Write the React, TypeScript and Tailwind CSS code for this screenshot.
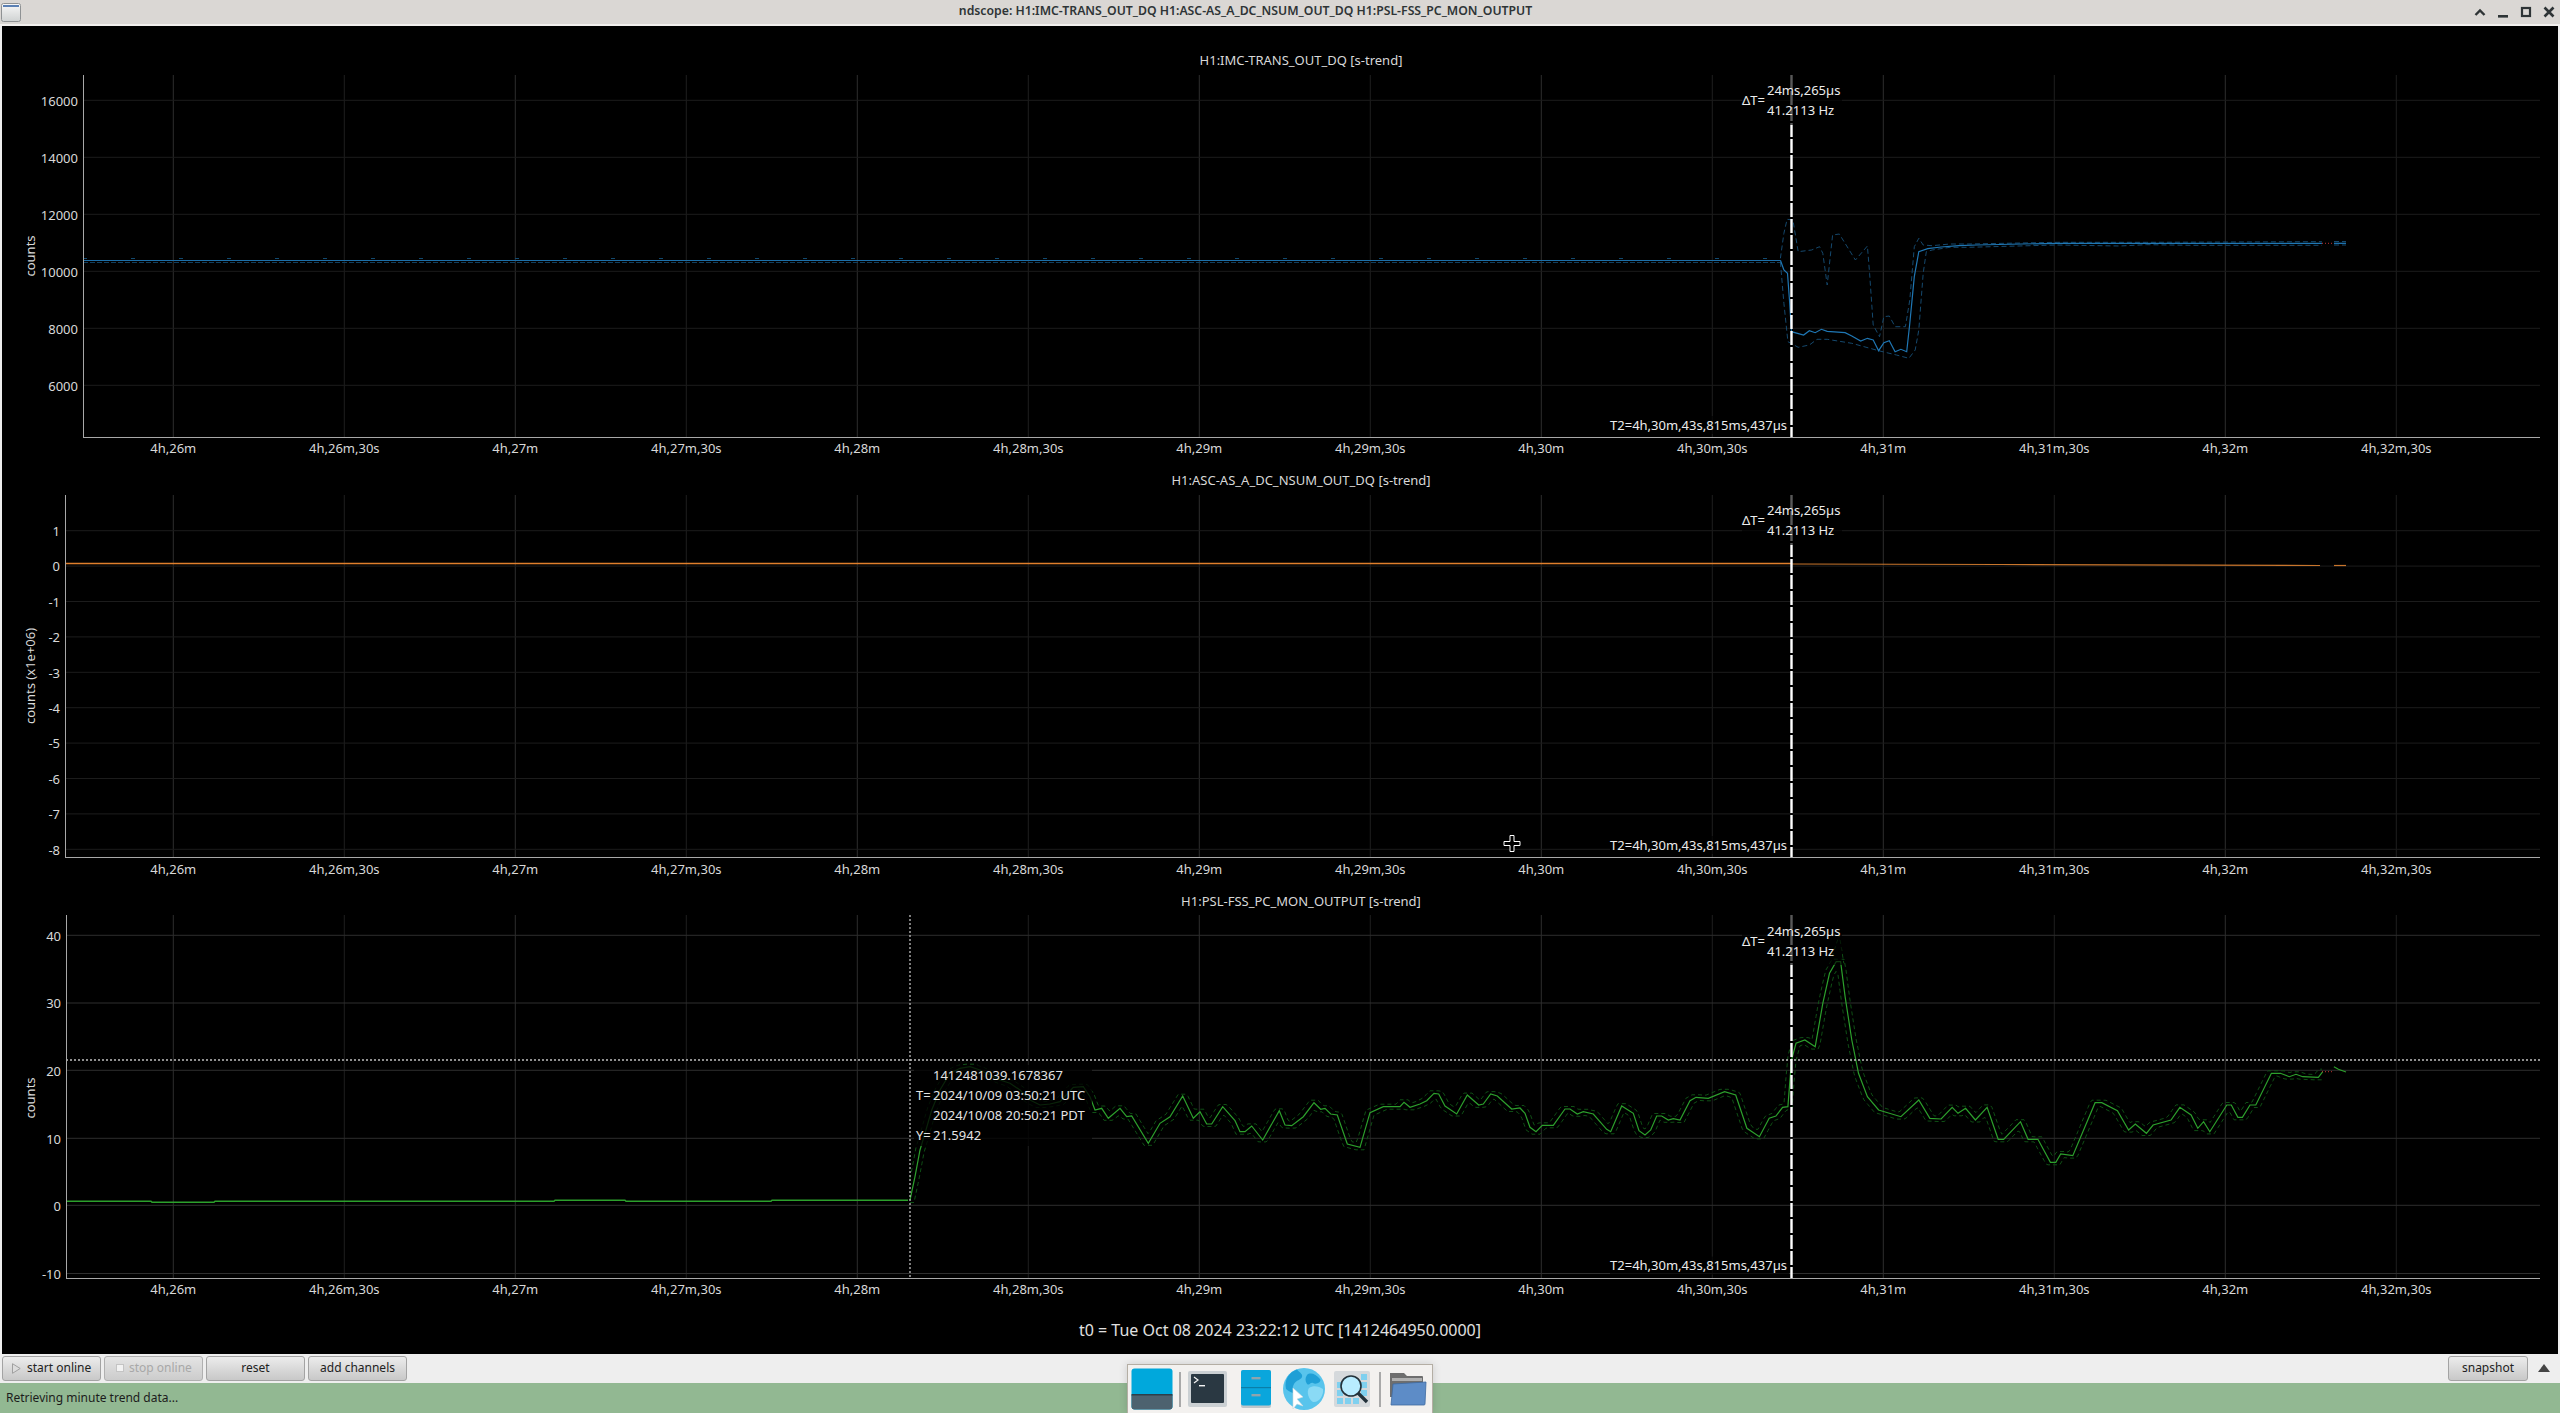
import React from "react";

type P = [number, number];
const z3 = (a: number[]): P[] => {
  const r: P[] = [];
  for (let i = 0; i < a.length; i += 2) r.push([1700 + a[i] / 2.24, 60 + a[i + 1] / 3]);
  return r;
};
const z6 = (a: number[]): P[] => {
  const r: P[] = [];
  for (let i = 0; i < a.length; i += 2) r.push([860 + a[i] / 3, 1000 + a[i + 1] / 3]);
  return r;
};
const z7 = (a: number[]): P[] => {
  const r: P[] = [];
  for (let i = 0; i < a.length; i += 2) r.push([1700 + a[i] / 2.24, 900 + a[i + 1] / 3]);
  return r;
};
const z10 = (a: number[]): P[] => {
  const r: P[] = [];
  for (let i = 0; i < a.length; i += 2) r.push([1340 + a[i] / 3, 1040 + a[i + 1] / 3]);
  return r;
};
const pts = (p: P[]) => p.map(([x, y]) => `${x.toFixed(1)},${y.toFixed(1)}`).join(" ");

const blueMain = z3([
  180, 601, 188, 630, 196, 640, 201, 730, 205, 815, 232, 825, 245, 812, 258, 818, 272, 808, 285, 814, 325, 818, 340, 828, 360, 843, 375,
  835, 388, 840, 400, 872, 412, 848, 424, 842, 437, 875, 450, 868, 463, 875, 470, 790, 480, 650, 490, 575, 510, 566, 540, 561, 580, 557, 620, 555,
  720, 552, 800, 550, 1000, 550, 1393, 550,
]);
const blueUp = z3([
  180, 595, 188, 520, 195, 478, 208, 480, 220, 575, 250, 570, 268, 560, 275, 580, 285, 675, 297, 525, 312, 522, 348, 600, 375, 558, 380,
  640, 388, 795, 402, 830, 412, 770, 424, 768, 437, 800, 460, 800, 470, 720, 480, 560, 490, 535, 500, 555, 520, 557, 560, 552, 600, 552, 800, 547,
  1000, 547, 1380, 545, 1393, 545,
]);
const blueDn = z3([
  180, 606, 188, 730, 197, 845, 220, 862, 245, 855, 262, 838, 285, 838, 340, 850, 400, 872, 440, 885, 468, 895, 482, 870, 490, 810, 500,
  640, 507, 575, 520, 570, 560, 562, 600, 562, 800, 555, 940, 558, 1000, 554, 1100, 556, 1393, 556,
]);

const greenFlat: P[] = [
  [66, 1201.3], [151, 1201.3], [152, 1202.3], [214, 1202.3], [215, 1201.3], [554, 1201.3], [555, 1200.3], [625, 1200.3], [626, 1201.3], [771, 1201.3],
  [772, 1200.3], [908, 1200.3],
];
const greenActive: P[] = [
  ...z6([
    150, 600, 165, 530, 180, 450, 195, 400, 215, 330, 240, 270, 270, 220, 300, 205, 330, 200, 360, 210, 390, 225, 420, 240, 450, 250, 480, 270, 510,
    300, 540, 315, 570, 312, 600, 305, 640, 262, 670, 260, 690, 290, 705, 330, 725, 325, 745, 355, 780, 325, 800, 350, 815, 348, 865, 430, 900, 370,
    930, 350, 968, 288, 1000, 355, 1020, 335, 1040, 372, 1055, 372, 1088, 320, 1125, 362, 1140, 395, 1155, 395, 1175, 378, 1208, 420, 1258, 332, 1275,
    375, 1295, 377, 1330, 350, 1362, 308, 1382, 328, 1395, 325, 1412, 342, 1432, 345,
  ]),
  ...z10([
    22, 312, 60, 322, 90, 218, 130, 200, 180, 200, 192, 187, 210, 202, 240, 192, 260, 182, 282, 160, 296, 162, 315, 198, 350, 222, 382, 165, 416, 195,
    430, 192, 452, 162, 472, 168, 515, 207, 540, 204, 555, 220, 570, 262, 588, 275, 607, 256, 640, 256, 675, 207, 690, 207, 712, 222, 730, 215, 760,
    222, 800, 268, 812, 275, 845, 198, 880, 220, 897, 272, 915, 285, 932, 270, 950, 228, 965, 228, 985, 240, 1000, 236, 1020, 240, 1050, 182, 1068,
    172, 1105, 175,
  ]),
  ...z7([
    55, 575, 80, 585, 105, 685, 133, 710, 155, 655, 170, 648, 185, 622, 197, 620, 205, 480, 215, 430, 235, 420, 258, 440, 275, 310, 290, 220, 305, 185, 315, 185,
    325, 290, 340, 420, 355, 520, 375, 590, 400, 630, 450, 650, 490, 600, 515, 655, 540, 657, 565, 622, 578, 640, 595, 625, 617, 660, 643, 622, 668,
    718, 680, 718, 718, 665, 735, 718, 757, 718, 785, 787, 797, 787, 808, 762, 835, 767, 885, 608, 900, 608, 935, 632, 960, 690, 975, 672, 1000, 700,
    1015, 675, 1055, 660, 1075, 622, 1100, 645, 1115, 685, 1128, 665, 1142, 695, 1180, 615, 1190, 615, 1205, 652, 1215, 652, 1232, 615, 1245, 615,
    1280, 520, 1300, 520, 1320, 530, 1335, 523, 1350, 530, 1385, 532, 1395, 515,
  ]),
];
const greenTail = z7([1420, 500, 1430, 508, 1447, 516]);
const greenPeak = z7([296, 170, 312, 105, 322, 190]);

const at = (p: P[], x: number) => {
  for (let i = 1; i < p.length; i++) {
    if (x <= p[i][0]) {
      const [a, b] = p[i - 1];
      const [c, d] = p[i];
      return c === a ? d : b + ((d - b) * (x - a)) / (c - a);
    }
  }
  return p[p.length - 1][1];
};
const envelope = (p: P[], sign: number, off: number): P[] => {
  const out: P[] = [];
  const s = p[0][0];
  const e = p[p.length - 1][0];
  for (let x = s; x <= e; x += 2) {
    let v = at(p, x);
    for (let d = -4; d <= 4; d += 1) {
      const w = at(p, Math.min(e, Math.max(s, x + d)));
      v = sign < 0 ? Math.min(v, w) : Math.max(v, w);
    }
    out.push([x, v + sign * off]);
  }
  return out;
};
const greenUp = envelope(greenActive, -1, 2.5);
const greenDn = envelope(greenActive, 1, 2.5);

const xLabels = [
  "4h,26m", "4h,26m,30s", "4h,27m", "4h,27m,30s", "4h,28m", "4h,28m,30s", "4h,29m", "4h,29m,30s", "4h,30m", "4h,30m,30s", "4h,31m", "4h,31m,30s", "4h,32m", "4h,32m,30s",
];
const xAt = (i: number) => 173.3 + 171 * i;
const CURSOR = 1791.5;

type PlotProps = {
  cls: string;
  vb: string;
  left: number;
  top: number;
  bottom: number;
  ticks: { y: number; t: string }[];
  grid: string;
  labelX: number;
  xLabelY: number;
  title: string;
  titleY: number;
  dy: number;
  children: React.ReactNode;
};

function Plot({ cls, vb, left, top, bottom, ticks, grid, labelX, xLabelY, title, titleY, dy, children }: PlotProps) {
  return (
    <svg className={cls} viewBox={vb} fontSize="13" fill="#d8d8d8">
      {xLabels.map((t, i) => (
        <line key={t} x1={xAt(i)} x2={xAt(i)} y1={top} y2={bottom} stroke={i % 2 === 0 ? "#2e2e2e" : "#1e1e1e"} />
      ))}
      {ticks.map((k) => (
        <line key={k.t} x1={left} x2={2540} y1={k.y} y2={k.y} stroke={grid} />
      ))}
      {children}
      <line x1={CURSOR} x2={CURSOR} y1={top} y2={bottom} stroke="#ffffff" strokeWidth="2.4" strokeDasharray="14 2" />
      <rect x={1742} y={top} width={100} height={50} fill="#000" fillOpacity="0.65" />
      <rect x={1610} y={dy + 416} width={179} height={18} fill="#000" fillOpacity="0.65" />
      <text x={1742} y={dy + 100} dominantBaseline="central" fill="#ececec">ΔT=</text>
      <text x={1767} y={dy + 90} dominantBaseline="central" fill="#ececec">24ms,265µs</text>
      <text x={1767} y={dy + 110} dominantBaseline="central" fill="#ececec">41.2113 Hz</text>
      <text x={1787} y={dy + 424.5} dominantBaseline="central" textAnchor="end" fill="#ececec">T2=4h,30m,43s,815ms,437µs</text>
      <line x1={left + 0.5} x2={left + 0.5} y1={top} y2={bottom} stroke="#a8a8a8" />
      <line x1={left} x2={2540} y1={bottom + 0.5} y2={bottom + 0.5} stroke="#a8a8a8" />
      {ticks.map((k) => (
        <text key={k.t} x={labelX} y={k.y + 0.2} textAnchor="end" dominantBaseline="central">{k.t}</text>
      ))}
      {xLabels.map((t, i) => (
        <text key={t} x={xAt(i)} y={xLabelY} textAnchor="middle" dominantBaseline="central">{t}</text>
      ))}
      <text x={0} y={0} textAnchor="middle" dominantBaseline="central" transform={`translate(30 ${titleY}) rotate(-90)`}>{title}</text>
    </svg>
  );
}

function PushButton({ label, disabled, icon, center }: { label: string; disabled?: boolean; icon?: React.ReactNode; center?: boolean }) {
  return (
    <button
      className={
        center
          ? "w-[99px] h-[25px] flex items-center justify-center rounded-[3px] border border-[#a3a3a3] bg-linear-to-b from-[#ececec] to-[#c8c8c8] text-[12px] text-[#222222]"
          : disabled
            ? "w-[99px] h-[25px] flex items-center pl-[11px] gap-[5px] rounded-[3px] border border-[#b0b0b0] bg-linear-to-b from-[#e4e4e4] to-[#cccccc] text-[12px] text-[#a8a8a8]"
            : "w-[99px] h-[25px] flex items-center pl-[9px] gap-[6px] rounded-[3px] border border-[#a3a3a3] bg-linear-to-b from-[#ececec] to-[#c8c8c8] text-[12px] text-[#222222]"
      }
    >
      {icon}
      {label}
    </button>
  );
}

function WindowIcon() {
  return (
    <svg width="20" height="19" viewBox="0 0 20 19" className="ml-[1px]">
      <defs>
        <linearGradient id="wi" x1="0" y1="0" x2="0" y2="1">
          <stop offset="0" stopColor="#f8f8f8" />
          <stop offset="1" stopColor="#cfd2d2" />
        </linearGradient>
      </defs>
      <rect x="0.5" y="0.5" width="19" height="18" rx="2" fill="url(#wi)" stroke="#8f9294" />
      <rect x="2" y="2" width="16" height="2" fill="#5b80b4" />
    </svg>
  );
}

function TitleButtons() {
  return (
    <div className="flex items-center gap-[3px] pr-[1px]">
      <svg width="20" height="20" viewBox="0 0 20 20"><path d="M5.5 13 10 8.5 14.5 13" fill="none" stroke="#2e3436" strokeWidth="2.4" /></svg>
      <svg width="20" height="20" viewBox="0 0 20 20"><rect x="5" y="13" width="10" height="2.6" fill="#2e3436" /></svg>
      <svg width="20" height="20" viewBox="0 0 20 20"><rect x="6" y="6" width="8" height="8" fill="none" stroke="#2e3436" strokeWidth="2.2" /></svg>
      <svg width="20" height="20" viewBox="0 0 20 20"><path d="M5.5 5.5 14.5 14.5M14.5 5.5 5.5 14.5" stroke="#2e3436" strokeWidth="2.6" /></svg>
    </div>
  );
}

function Dock() {
  return (
    <div className="absolute left-[1127px] bottom-0 w-[306px] h-[49px] flex items-center bg-[#f3f1ef] border border-b-0 border-[#b4aea4] shadow-[0_0_8px_rgba(0,0,0,0.15)]">
      <svg width="42" height="42" viewBox="0 0 42 42" className="ml-[3px]">
        <rect x="0.5" y="0.5" width="41" height="41" rx="3" fill="#00a8dc" />
        <path d="M0.5 27H41.5V38.5a3 3 0 0 1-3 3H3.5a3 3 0 0 1-3-3Z" fill="#4d626f" />
        <rect x="0.5" y="26" width="41" height="1.5" fill="#2c3e4a" />
      </svg>
      <div className="ml-[6px] w-[2px] h-[35px] bg-[#a9a9a9]" />
      <svg width="39" height="36" viewBox="0 0 39 36" className="ml-[7px]">
        <rect x="0" y="0" width="39" height="36" rx="2" fill="#cbd0d3" />
        <rect x="3" y="3" width="33" height="29" rx="1" fill="#2a3842" />
        <path d="M6 6 10 9 6 12" fill="none" stroke="#f4f4f4" strokeWidth="1.2" />
        <rect x="11" y="14" width="6" height="1.4" fill="#f4f4f4" />
      </svg>
      <svg width="30" height="38" viewBox="0 0 30 38" className="ml-[14px]">
        <rect x="0" y="0" width="30" height="38" rx="2" fill="#bfc6ca" />
        <rect x="0" y="0" width="30" height="35.5" rx="2" fill="#0aa6dc" />
        <rect x="0" y="17" width="30" height="1.2" fill="#0a7ea8" />
        <rect x="10.5" y="7" width="9" height="2.4" fill="#8fa4ad" />
        <rect x="10.5" y="24" width="9" height="2.4" fill="#8fa4ad" />
      </svg>
      <svg width="42" height="42" viewBox="0 0 42 42" className="ml-[12px]">
        <circle cx="21" cy="21" r="21" fill="#58c4ec" />
        <path d="M14 1.5C17 5 20 6 19 9c-1 3-6 3-8 7s-2 7 1 9-6-1-9-4C1 12 6 4 14 1.5Z" fill="#1f9fd6" />
        <path d="M24 7c3-3 9-1 13 4 2 3-4 6-7 4-3-1-3 3-6 1-2-3-2-6 0-9Z" fill="#1f9fd6" />
        <path d="M26 20c4-3 10-2 14 1 1 6-4 14-10 13-4-2-7-10-4-14Z" fill="#8adaf5" />
        <path d="M14 20 14 41 18 36 24 38 18 31 24 29Z" transform="translate(-4 0)" fill="#ffffff" stroke="#cfd8dc" strokeWidth="0.6" />
      </svg>
      <svg width="36" height="36" viewBox="0 0 36 36" className="ml-[9px]">
        <rect width="36" height="36" rx="2" fill="#d5d9dc" />
        <g fill="#7fd0ef">
          <rect x="27" y="3" width="6" height="6" /><rect x="27" y="11" width="6" height="6" /><rect x="3" y="19" width="6" height="6" /><rect x="3" y="27" width="6" height="6" />
          <rect x="11" y="27" width="6" height="6" /><rect x="19" y="27" width="6" height="6" /><rect x="3" y="11" width="6" height="6" /><rect x="27" y="19" width="6" height="6" />
        </g>
        <circle cx="17" cy="15" r="10" fill="#b8ecff" stroke="#22313a" strokeWidth="1.6" />
        <path d="M24 22 33 31" stroke="#22313a" strokeWidth="3.4" />
      </svg>
      <div className="ml-[9px] w-[2px] h-[35px] bg-[#a9a9a9]" />
      <svg width="38" height="34" viewBox="0 0 38 34" className="ml-[8px]">
        <path d="M1 1h14l3 3h15a1 1 0 0 1 1 1v20H1Z" fill="#6e6e6e" />
        <rect x="3" y="6" width="30" height="3" fill="#b0b0b0" />
        <path d="M4 12 37 10 36 32a1 1 0 0 1-1 1H2Z" fill="#5d8cc7" stroke="#3e6aa0" strokeWidth="0.8" />
      </svg>
    </div>
  );
}

const plot1Ticks = [
  { y: 100.3, t: "16000" }, { y: 157.3, t: "14000" }, { y: 214.3, t: "12000" }, { y: 271.3, t: "10000" }, { y: 328.3, t: "8000" }, { y: 385.3, t: "6000" },
];
const plot2Ticks = [1, 0, -1, -2, -3, -4, -5, -6, -7, -8].map((v, i) => ({ y: 530.7 + 35.4 * i, t: String(v) }));
const plot3Ticks = [
  { y: 935.3, t: "40" }, { y: 1003, t: "30" }, { y: 1070.3, t: "20" }, { y: 1138.3, t: "10" }, { y: 1205.3, t: "0" }, { y: 1273.5, t: "-10" },
];

export default function App() {
  return (
    <div className="relative w-[2560px] h-[1413px] overflow-hidden flex flex-col bg-[#eeeeee] font-['Noto_Sans',sans-serif]">
      <header className="h-[24px] shrink-0 bg-[#dad7d4] flex items-center justify-between">
        <WindowIcon />
        <span className="text-[12.25px] font-semibold text-[#2e3436] leading-[20px] mb-[3px]">
          ndscope: H1:IMC-TRANS_OUT_DQ H1:ASC-AS_A_DC_NSUM_OUT_DQ H1:PSL-FSS_PC_MON_OUTPUT
        </span>
        <TitleButtons />
      </header>
      <div className="h-[2px] shrink-0 bg-[#f2f0ee]" />
      <main className="mx-[2px] h-[1328px] shrink-0 bg-black flex flex-col text-[#d8d8d8]">
        <h2 className="h-[44px] shrink-0 flex items-end justify-center pl-[42px] text-[13px] leading-[20px] font-normal">H1:IMC-TRANS_OUT_DQ [s-trend]</h2>
        <Plot cls="block shrink-0 w-[2556px] h-[400px]" vb="2 70 2556 400" left={83} top={75} bottom={437} ticks={plot1Ticks} grid="#1c1c1c" labelX={78} xLabelY={448} title="counts" titleY={256} dy={0}>
          <line x1={83} x2={1780} y1={258.5} y2={258.5} stroke="#124a70" strokeDasharray="4 44" shapeRendering="crispEdges" />
          <line x1={83} x2={1780} y1={262.5} y2={262.5} stroke="#103f60" strokeDasharray="5 2" shapeRendering="crispEdges" />
          <line x1={83} x2={1780} y1={260.5} y2={260.5} stroke="#1d6fa8" shapeRendering="crispEdges" />
          <polyline points={pts(blueUp)} fill="none" stroke="#15496e" strokeDasharray="5 3" />
          <polyline points={pts(blueDn)} fill="none" stroke="#15496e" strokeDasharray="5 3" />
          <polyline points={pts(blueMain)} fill="none" stroke="#1f77b4" strokeWidth="1.2" />
          <line x1={2322} x2={2334} y1={243.3} y2={243.3} stroke="#c03030" strokeDasharray="1 2" />
          <line x1={2334} x2={2346} y1={243.3} y2={243.3} stroke="#1f77b4" strokeWidth="1.3" />
          <line x1={2334} x2={2346} y1={241.5} y2={241.5} stroke="#15496e" strokeDasharray="5 3" />
          <line x1={2334} x2={2346} y1={245} y2={245} stroke="#15496e" strokeDasharray="5 3" />
        </Plot>
        <h2 className="h-[20px] shrink-0 flex items-center justify-center pl-[42px] text-[13px] leading-[20px] font-normal">H1:ASC-AS_A_DC_NSUM_OUT_DQ [s-trend]</h2>
        <Plot cls="block shrink-0 w-[2556px] h-[401px]" vb="2 490 2556 401" left={65} top={495} bottom={857} ticks={plot2Ticks} grid="#1c1c1c" labelX={60} xLabelY={869} title="counts (x1e+06)" titleY={676} dy={420}>
          <line x1={65} x2={1791} y1={563.5} y2={563.5} stroke="#e07f2c" strokeWidth="1.3" />
          <polyline points="1791,564 2000,564.5 2320,565.5" fill="none" stroke="#c8752c" strokeWidth="1.2" />
          <line x1={2334} x2={2346} y1={565.5} y2={565.5} stroke="#c8752c" strokeWidth="1.2" />
          <path d="M1510 835.5h4v6h6v4h-6v6h-4v-6h-6v-4h6Z" fill="#000" stroke="#ffffff" strokeWidth="1" />
        </Plot>
        <h2 className="h-[20px] shrink-0 flex items-center justify-center pl-[42px] text-[13px] leading-[20px] font-normal">H1:PSL-FSS_PC_MON_OUTPUT [s-trend]</h2>
        <Plot cls="block shrink-0 w-[2556px] h-[389px]" vb="2 911 2556 389" left={66} top={915} bottom={1278} ticks={plot3Ticks} grid="#2e2e2e" labelX={61} xLabelY={1289} title="counts" titleY={1098} dy={840.6}>
          <polyline points={pts(greenFlat)} fill="none" stroke="#2ca02c" strokeWidth="1.4" />
          <polyline points={pts(greenUp)} fill="none" stroke="#0f4f15" strokeDasharray="4 3" />
          <polyline points={pts(greenDn)} fill="none" stroke="#0f4f15" strokeDasharray="4 3" />
          <polyline points={pts(greenPeak)} fill="none" stroke="#0f4f15" strokeDasharray="4 3" />
          <polyline points={pts(greenActive)} fill="none" stroke="#2ca02c" strokeWidth="1.2" />
          <line x1={2322} x2={2334} y1={1071.7} y2={1071.7} stroke="#c03030" strokeDasharray="1 2" />
          <polyline points={pts(greenTail)} fill="none" stroke="#2ca02c" strokeWidth="1.2" />
          <line x1={910} x2={910} y1={915} y2={1278} stroke="#c0c0c0" strokeWidth="1.3" strokeDasharray="2 2" />
          <line x1={66} x2={2540} y1={1060} y2={1060} stroke="#c0c0c0" strokeWidth="1.3" strokeDasharray="2 2" />
          <rect x={914} y={1065} width={178} height={81} fill="#000" fillOpacity="0.78" />
          <text x={933} y={1075} dominantBaseline="central" fill="#e4e4e4">1412481039.1678367</text>
          <text x={916} y={1095} dominantBaseline="central" fill="#e4e4e4">T=</text>
          <text x={933} y={1095} dominantBaseline="central" fill="#e4e4e4">2024/10/09 03:50:21 UTC</text>
          <text x={933} y={1115} dominantBaseline="central" fill="#e4e4e4">2024/10/08 20:50:21 PDT</text>
          <text x={916} y={1135} dominantBaseline="central" fill="#e4e4e4">Y=</text>
          <text x={933} y={1135} dominantBaseline="central" fill="#e4e4e4">21.5942</text>
        </Plot>
        <div className="flex-1 flex items-center justify-center pt-[5px] text-[16px] text-[#e0e0e0]">t0 = Tue Oct 08 2024 23:22:12 UTC [1412464950.0000]</div>
      </main>
      <div className="h-[29px] shrink-0 flex items-center gap-[3px] pl-[2px] pr-[10px] pb-[1px]">
        <PushButton
          label="start online"
          icon={<svg width="9" height="11" viewBox="0 0 9 11"><path d="M0.5 0.7 8.2 5.5 0.5 10.3Z" fill="#dcdcdc" stroke="#a0a0a0" /></svg>}
        />
        <PushButton
          label="stop online"
          disabled
          icon={<svg width="8" height="8" viewBox="0 0 8 8"><rect x="0.5" y="0.5" width="7" height="7" fill="#f2f2f2" stroke="#c4c4c4" /></svg>}
        />
        <PushButton label="reset" center />
        <PushButton label="add channels" center />
        <button className="ml-auto w-[80px] h-[25px] rounded-[3px] border border-[#a3a3a3] bg-linear-to-b from-[#ececec] to-[#c8c8c8] text-[12px] text-[#222222]">snapshot</button>
        <svg width="12" height="8" viewBox="0 0 12 8" className="ml-[7px]"><path d="M6 0 12 8H0Z" fill="#444444" /></svg>
      </div>
      <footer className="flex-1 bg-[#92b892] flex items-center pl-[6px] text-[12px] text-[#1c1c1c]">Retrieving minute trend data...</footer>
      <Dock />
    </div>
  );
}
